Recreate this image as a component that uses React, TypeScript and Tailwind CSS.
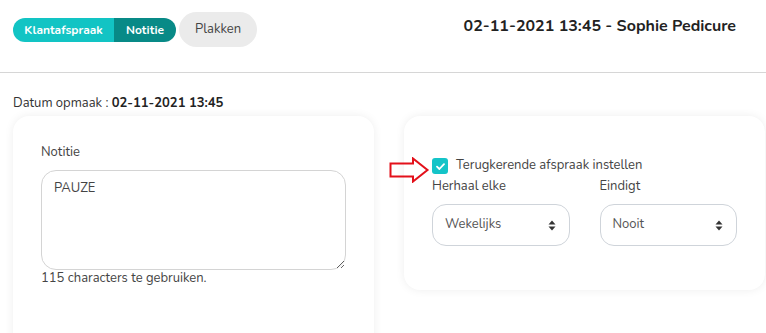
export default function App() {
  return (
    <div className="h-[333px] w-[766px] overflow-hidden bg-white font-['Nunito','Lato',sans-serif] text-[#333]">
      {/* Header */}
      <header className="flex h-[73px] items-start justify-between border-b border-[#d6d6d6] pl-[13px] pr-[30px]">
        <div className="flex items-center gap-[3px] pt-[12px]">
          <div className="flex h-[24px] overflow-hidden rounded-full text-[12px] font-bold text-white">
            <span className="flex w-[101px] items-center justify-center bg-[#12c4c4]">Klantafspraak</span>
            <span className="flex w-[62px] items-center justify-center bg-[#088a87]">Notitie</span>
          </div>
          <button className="h-[35px] w-[78px] rounded-full bg-[#ebebeb] text-[13px] text-[#444]">
            Plakken
          </button>
        </div>
        <h1 className="pt-[14px] text-[16px] font-bold text-[#222]">02-11-2021 13:45 - Sophie Pedicure</h1>
      </header>

      <main className="pl-[13px] pt-[22px]">
        <p className="text-[13px] leading-[16px] text-[#333]">
          Datum opmaak : <span className="font-bold text-[#222]">02-11-2021 13:45</span>
        </p>

        <div className="mt-[5px] flex items-start gap-[30px]">
          {/* Notitie card */}
          <section className="h-[240px] w-[361px] shrink-0 rounded-[16px] bg-white pl-[28px] pt-[28px] shadow-[0_0_10px_rgba(0,0,0,0.07)]">
            <label className="block text-[13px] leading-[16px] text-[#444]">Notitie</label>
            <textarea
              className="mt-[10px] block h-[100px] w-[305px] rounded-[15px] border border-[#d4d4d4] px-[12px] pt-[8px] text-[13px] text-[#444] outline-none"
              defaultValue="PAUZE"
            />
            <p className="text-[13px] leading-[16px] text-[#444]">115 characters te gebruiken.</p>
          </section>

          {/* Herhaling card */}
          <section className="relative h-[174px] w-[361px] shrink-0 rounded-[16px] bg-white px-[28px] pt-[42px] shadow-[0_0_10px_rgba(0,0,0,0.07)]">
            <svg className="absolute left-[-15px] top-[41px]" width="41" height="26" viewBox="0 0 41 26">
              <path d="M1.5 6.5 H24 V1.5 L38.5 13 L24 24.5 V19.5 H1.5 Z" fill="none" stroke="#e3101a" strokeWidth="2" strokeLinejoin="miter" />
            </svg>
            <label className="flex h-[16px] items-center gap-[8px] text-[13px] text-[#444]">
              <span className="flex h-[16px] w-[16px] items-center justify-center rounded-[3px] bg-[#14c4c8]">
                <svg width="9" height="7" viewBox="0 0 9 7">
                  <path d="M1 3.6 L3.4 6 L8 1.2" fill="none" stroke="white" strokeWidth="1.8" strokeLinecap="round" strokeLinejoin="round" />
                </svg>
              </span>
              Terugkerende afspraak instellen
            </label>
            <div className="mt-[4px] grid grid-cols-2 gap-[30px]">
              {[
                { label: "Herhaal elke", value: "Wekelijks" },
                { label: "Eindigt", value: "Nooit" },
              ].map((f) => (
                <div key={f.label}>
                  <div className="text-[13px] leading-[16px] text-[#444]">{f.label}</div>
                  <div className="mt-[10px] flex h-[42px] items-center justify-between rounded-[14px] border border-[#cfd4da] pl-[12px] pr-[13px] text-[13px] text-[#555]">
                    <span>{f.value}</span>
                    <svg width="8" height="11" viewBox="0 0 8 11">
                      <path d="M4 0.5 L7.5 4.5 H0.5 Z M4 10.5 L7.5 6.5 H0.5 Z" fill="#333" />
                    </svg>
                  </div>
                </div>
              ))}
            </div>
          </section>
        </div>
      </main>
    </div>
  );
}
